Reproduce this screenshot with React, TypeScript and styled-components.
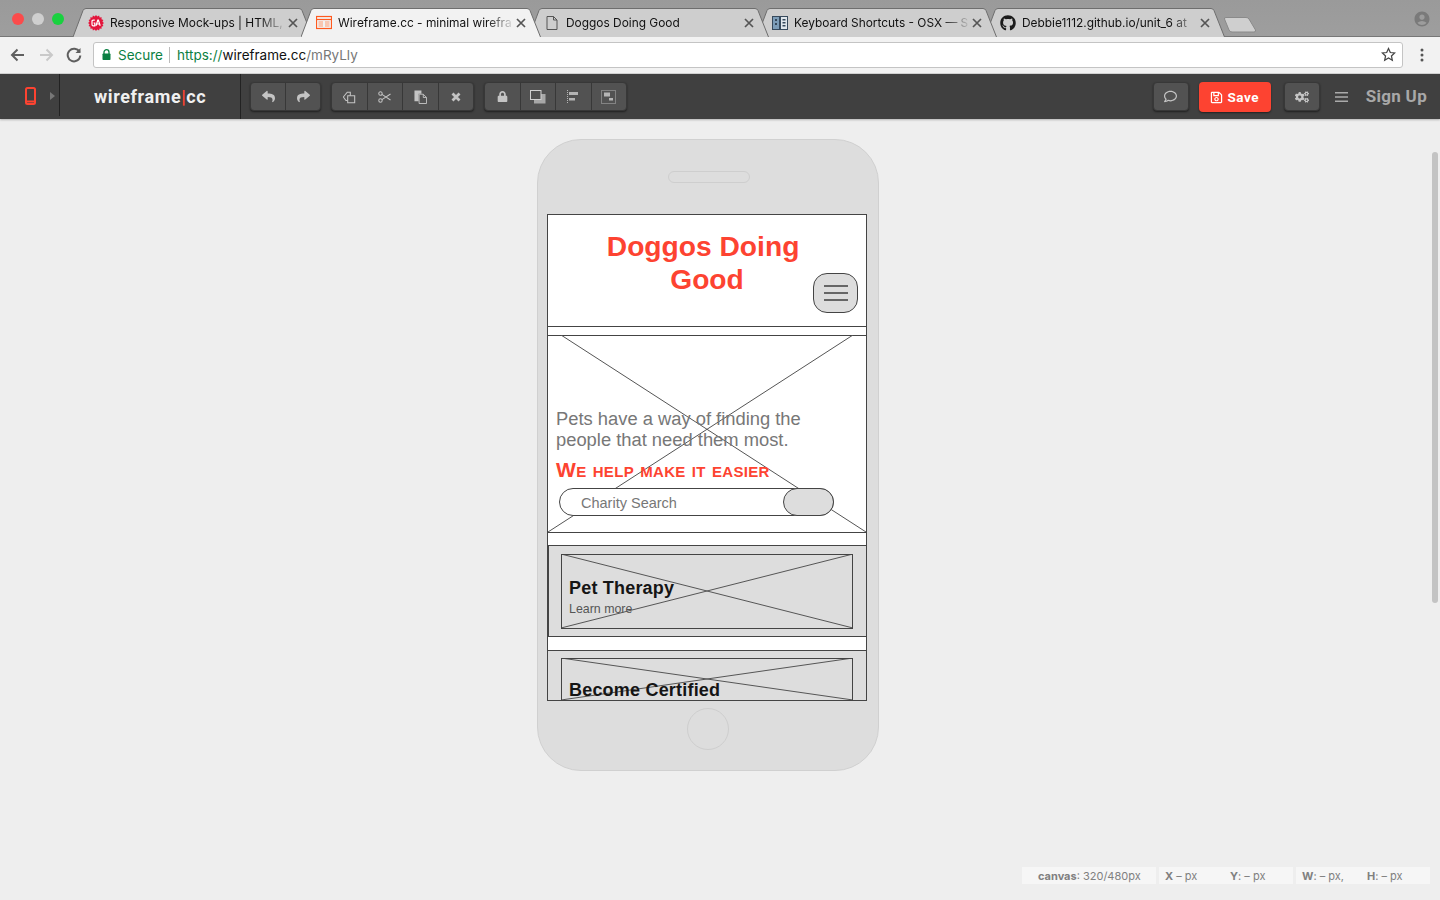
import React from "react";
import styled, { createGlobalStyle } from "styled-components";
import { FaGithub, FaRegComment, FaRegSave, FaCogs, FaLock, FaReply, FaShare } from "react-icons/fa";
import { MdAccountCircle } from "react-icons/md";

const RED = "#fd4331";

const Global = createGlobalStyle`
  html, body { margin: 0; padding: 0; height: 100%; background: #eeeeee; overflow: hidden; }
  #root { height: 100%; }
  * { box-sizing: border-box; }
`;

const Page = styled.div`
  position: relative;
  width: 1440px;
  height: 900px;
  display: flex;
  flex-direction: column;
  font-family: "Liberation Sans", Arial, sans-serif;
  overflow: hidden;
`;

const TabStrip = styled.div`
  height: 37px;
  flex: none;
  display: flex;
  align-items: flex-end;
  padding-left: 73px;
  background: linear-gradient(#9a9a9a, #9e9e9e);
  border-bottom: 1px solid #777;
`;
const Lights = styled.div`
  position: absolute;
  left: 12px;
  top: 13px;
  display: flex;
  gap: 8px;
`;
const Light = styled.span<{ $c: string }>`
  width: 12px;
  height: 12px;
  border-radius: 50%;
  background: ${(p) => p.$c};
`;
const TabBox = styled.div<{ $z: number; $first?: boolean }>`
  position: relative;
  width: 240px;
  height: 29px;
  flex: none;
  margin-left: ${(p) => (p.$first ? "0" : "-12px")};
  margin-bottom: -1px;
  z-index: ${(p) => p.$z};
  display: flex;
  align-items: center;
  padding: 0 14px 0 15px;
  font-family: Inter, "Liberation Sans", sans-serif;
  font-size: 11.9px;
  color: #111;
`;
const TabShape = styled.svg`
  position: absolute;
  inset: 0;
  width: 100%;
  height: 100%;
`;
const TabIcon = styled.span`
  position: relative;
  width: 16px;
  height: 16px;
  margin-right: 6px;
  flex: none;
  display: flex;
`;
const TabTitle = styled.span`
  position: relative;
  flex: 1;
  white-space: nowrap;
  overflow: hidden;
  -webkit-mask-image: linear-gradient(to right, #000 calc(100% - 28px), rgba(0, 0, 0, 0.12) calc(100% - 3px));
  mask-image: linear-gradient(to right, #000 calc(100% - 28px), rgba(0, 0, 0, 0.12) calc(100% - 3px));
`;
const TabClose = styled.span`
  position: relative;
  width: 12px;
  display: flex;
  justify-content: center;
  flex: none;
  color: #555;
`;
const NewTab = styled.svg`
  margin: 0 0 3px -2px;
  width: 34px;
  height: 16px;
  flex: none;
`;
const Avatar = styled.span`
  position: absolute;
  left: 1413px;
  top: 10px;
  color: #7a7a7a;
  display: flex;
`;

const AddressRow = styled.div`
  height: 37px;
  flex: none;
  background: #f2f2f2;
  border-bottom: 1px solid #d4d4d4;
  display: flex;
  align-items: center;
  padding: 0 0 1px 9px;
`;
const NavIcon = styled.svg`
  width: 18px;
  height: 18px;
  margin-right: 10px;
  flex: none;
`;
const Omnibox = styled.div`
  width: 1310px;
  height: 26px;
  flex: none;
  background: #fff;
  border: 1px solid #c4c4c4;
  border-radius: 3px;
  display: flex;
  align-items: center;
  padding: 0 6px 0 8px;
  font-family: Inter, "Liberation Sans", sans-serif;
  font-size: 13.5px;
`;
const Secure = styled.span`
  color: #0b8043;
  margin-left: 7px;
  padding-right: 6px;
  border-right: 1px solid #bbb;
  line-height: 16px;
  margin-right: 7px;
`;
const UrlPart = styled.span<{ $c: string }>`
  color: ${(p) => p.$c};
`;
const Spacer = styled.span`
  flex: 1;
`;
const Kebab = styled.svg`
  margin-left: 10px;
  width: 18px;
  height: 18px;
  flex: none;
`;

const AppBar = styled.div`
  height: 45px;
  flex: none;
  background: #404040;
  display: flex;
  align-items: center;
  box-shadow: 0 1px 2px rgba(0, 0, 0, 0.25);
  position: relative;
  z-index: 2;
`;
const DeviceSection = styled.div`
  width: 60px;
  height: 42px;
  align-self: flex-start;
  flex: none;
  border-right: 1px solid #222;
  display: flex;
  align-items: center;
  padding: 2px 0 0 25px;
  gap: 14px;
`;
const Logo = styled.div`
  width: 181px;
  height: 45px;
  flex: none;
  border-right: 1px solid #222;
  display: flex;
  align-items: center;
  padding: 0 0 1px 34px;
  font-family: Roboto, "Liberation Sans", sans-serif;
  font-weight: 700;
  font-size: 18px;
  letter-spacing: 0.6px;
  color: #f0f0f0;
`;
const LogoBar = styled.span`
  color: ${RED};
  font-weight: 700;
`;
const Group = styled.div<{ $n: number; $first?: boolean }>`
  display: flex;
  width: ${(p) => p.$n * 36 - 1}px;
  margin-left: ${(p) => (p.$first ? "9px" : "10px")};
  height: 29px;
  flex: none;
  background: #525252;
  border-radius: 4px;
  border: 1px solid #383838;
  box-shadow: 0 1px 2px rgba(0, 0, 0, 0.5);
`;
const ToolButton = styled.div`
  flex: 1;
  display: flex;
  align-items: center;
  justify-content: center;
  color: #c4c4c4;
  border-right: 1px solid #383838;
  &:last-child {
    border-right: 0;
  }
`;
const SingleButton = styled.div<{ $ml: number }>`
  width: 36px;
  height: 29px;
  flex: none;
  margin-left: ${(p) => p.$ml}px;
  display: flex;
  align-items: center;
  justify-content: center;
  background: #525252;
  border: 1px solid #383838;
  border-radius: 4px;
  color: #c4c4c4;
  box-shadow: 0 1px 2px rgba(0, 0, 0, 0.5);
`;
const SaveButton = styled.div`
  width: 72px;
  height: 30px;
  flex: none;
  margin: 1px 0 0 10px;
  display: flex;
  align-items: center;
  justify-content: center;
  gap: 4px;
  background: ${RED};
  border-radius: 4px;
  color: #fff;
  font-family: Roboto, "Liberation Sans", sans-serif;
  font-weight: 700;
  font-size: 13.5px;
  letter-spacing: 0.5px;
  box-shadow: 0 1px 2px rgba(0, 0, 0, 0.5);
`;
const Burger = styled.svg`
  width: 13px;
  height: 12px;
  margin-left: 15px;
  flex: none;
`;
const SignUp = styled.div`
  margin: 0 13px 2px 18px;
  font-family: Roboto, "Liberation Sans", sans-serif;
  font-weight: 700;
  font-size: 17px;
  letter-spacing: 0.3px;
  color: #a8a8a8;
  white-space: nowrap;
`;
const BarSpacer = styled.div`
  flex: 1;
`;

const Workspace = styled.div`
  flex: 1;
  padding: 20px 0 0 537px;
  background: #eeeeee;
`;
const Phone = styled.div`
  width: 342px;
  height: 632px;
  background: #dddddd;
  border: 1px solid #d0d0d0;
  border-radius: 44px;
  display: flex;
  flex-direction: column;
  align-items: center;
`;
const Speaker = styled.div`
  width: 82px;
  height: 12px;
  margin: 31px 0 31px 1px;
  border: 1px solid #cecece;
  border-radius: 6px;
`;
const Screen = styled.div`
  position: relative;
  width: 320px;
  height: 487px;
  margin-left: -2px;
  background: #fff;
  border: 1px solid #444;
  overflow: hidden;
`;
const HomeButton = styled.div`
  width: 42px;
  height: 42px;
  margin-top: 7px;
  border: 1px solid #cecece;
  border-radius: 50%;
`;

const Node = styled.div<{ $x: number; $y: number; $w: number; $h: number; $bg?: string }>`
  position: absolute;
  left: ${(p) => p.$x}px;
  top: ${(p) => p.$y}px;
  width: ${(p) => p.$w}px;
  height: ${(p) => p.$h}px;
  border: 1px solid #444;
  background: ${(p) => p.$bg || "transparent"};
`;
const Rule = styled.div<{ $y: number }>`
  position: absolute;
  left: 0;
  right: 0;
  top: ${(p) => p.$y}px;
  border-top: 1px solid #444;
`;
const Cross = styled.svg<{ $x: number; $y: number; $w: number; $h: number }>`
  position: absolute;
  left: ${(p) => p.$x}px;
  top: ${(p) => p.$y}px;
  width: ${(p) => p.$w}px;
  height: ${(p) => p.$h}px;
`;
const Title = styled.div`
  position: absolute;
  left: 0;
  top: 15px;
  width: 318px;
  text-align: center;
  color: ${RED};
  font-weight: 700;
  font-size: 28.2px;
  line-height: 33px;
`;
const MenuButton = styled.div`
  position: absolute;
  left: 265px;
  top: 58px;
  width: 45px;
  height: 40px;
  background: #dddddd;
  border: 1px solid #444;
  border-radius: 14px;
  display: flex;
  flex-direction: column;
  align-items: center;
  justify-content: center;
  gap: 5px;
`;
const MenuLine = styled.span`
  width: 24px;
  height: 2px;
  background: #666;
`;
const Lead = styled.div`
  position: absolute;
  left: 8px;
  top: 193px;
  width: 300px;
  color: #777;
  font-size: 18.35px;
  line-height: 21px;
`;
const Tagline = styled.div`
  position: absolute;
  left: 8px;
  top: 242px;
  white-space: nowrap;
  color: ${RED};
  font-weight: 700;
  font-size: 21px;
  line-height: 26px;
  letter-spacing: 0.33px;
  font-variant: small-caps;
`;
const SearchPill = styled.div`
  position: absolute;
  left: 11px;
  top: 273px;
  width: 275px;
  height: 28px;
  background: #fff;
  border: 1px solid #444;
  border-radius: 14px;
  padding: 2px 0 0 21px;
  display: flex;
  align-items: center;
  color: #777;
  font-size: 14.5px;
`;
const SearchButton = styled.div`
  position: absolute;
  right: -1px;
  top: -1px;
  width: 51px;
  height: 28px;
  background: #dddddd;
  border: 1px solid #444;
  border-radius: 14px;
`;
const CardTitle = styled.div<{ $y: number }>`
  position: absolute;
  left: 21px;
  top: ${(p) => p.$y}px;
  white-space: nowrap;
  color: #151515;
  font-weight: 700;
  font-size: 18px;
  letter-spacing: 0.2px;
  line-height: 24px;
`;
const CardLink = styled.div`
  position: absolute;
  left: 21px;
  top: 386px;
  white-space: nowrap;
  color: #555;
  font-size: 12.4px;
  line-height: 16px;
`;

const Scrollbar = styled.div`
  position: absolute;
  left: 1432px;
  top: 152px;
  width: 6px;
  height: 451px;
  background: #c3c3c3;
  border-radius: 3px;
`;
const StatusBar = styled.div`
  position: absolute;
  left: 1022px;
  top: 867px;
  display: flex;
  gap: 3px;
  color: #808080;
  font-family: Inter, "Liberation Sans", sans-serif;
  font-size: 11px;
`;
const StatusCell = styled.div<{ $pad: number }>`
  width: 134px;
  height: 17px;
  background: #f6f6f6;
  display: flex;
  align-items: center;
  padding-left: ${(p) => p.$pad}px;
  white-space: nowrap;
`;
const StatusField = styled.span<{ $w: number }>`
  width: ${(p) => p.$w}px;
  flex: none;
`;

const tabPath = "M0 29 L10 2.500 Q11 0.500 13 0.500 H226 Q228 0.500 229 2.500 L239.500 29";

const burst = Array.from({ length: 32 }, (_, i) => {
  const r = i % 2 === 0 ? 8 : 6.6;
  const a = (i / 32) * Math.PI * 2;
  return `${(8 + r * Math.cos(a)).toFixed(2)},${(8 + r * Math.sin(a)).toFixed(2)}`;
}).join(" ");

const GaIcon = () => (
  <svg width="16" height="16" viewBox="0 0 16 16">
    <polygon points={burst} fill="#e3163c" />
    <path d="M6.800 5.200H5.200Q4 5.200 4 6.500v3Q4 10.800 5.200 10.800H6.800V8H5.600M8 10.800L9.800 5.200h.6L12.200 10.800M8.700 9h2.800" fill="none" stroke="#fff" strokeWidth="1.200" />
  </svg>
);
const WireIcon = () => (
  <svg width="16" height="16" viewBox="0 0 16 16" fill="none" stroke="#ff5a1f" strokeWidth="1.200">
    <rect x="0.500" y="1.500" width="15" height="12" />
    <path d="M0.500 4.500h15" />
    <path d="M2.500 7h4.500M2.500 9h4.500M2.500 11h4.500M9 7h4.500M9 9h4.500M9 11h4.500" stroke="#ff9a70" strokeWidth="1" />
  </svg>
);
const DocIcon = () => (
  <svg width="16" height="16" viewBox="0 0 16 16" fill="none" stroke="#555" strokeWidth="1">
    <path d="M3 1.500h6.500L13 5v9.500H3z" />
    <path d="M9.500 1.500V5H13" />
  </svg>
);
const BookIcon = () => (
  <svg width="16" height="16" viewBox="0 0 16 16">
    <rect x="0" y="1" width="16" height="14" fill="#36495c" />
    <rect x="1" y="2" width="6" height="12" fill="#7d9db8" />
    <rect x="9" y="2" width="6" height="12" fill="#dfe6ec" />
    <path d="M3 4h2v2H3zM3 8h2v2H3zM10.500 4h3v1.500h-3zM10.500 7h3v1.500h-3zM10.500 10h3v1.500h-3z" fill="#36495c" />
  </svg>
);

const X = () => (
  <svg width="10" height="10" viewBox="0 0 10 10" stroke="currentColor" strokeWidth="1.700">
    <path d="M1 1l8 8M9 1l-8 8" />
  </svg>
);

const tabs = [
  { title: "Responsive Mock-ups | HTML,", icon: <GaIcon /> },
  { title: "Wireframe.cc - minimal wirefra", icon: <WireIcon />, active: true },
  { title: "Doggos Doing Good", icon: <DocIcon /> },
  { title: "Keyboard Shortcuts - OSX — S", icon: <BookIcon /> },
  { title: "Debbie1112.github.io/unit_6 at", icon: <FaGithub size={16} color="#1b1b1b" /> },
];

const CopyIcon = () => (
  <svg width="14" height="14" viewBox="0 0 16 16" fill="none" stroke="currentColor" strokeWidth="1.200">
    <path d="M1.500 8L6 2.500h3.500v4" />
    <path d="M1.500 8L4.500 12h2" />
    <path d="M6.500 6.500H14.500V14.500H6.500z" />
  </svg>
);
const ScissorsIcon = () => (
  <svg width="13" height="12" viewBox="0 0 15 14" fill="none" stroke="currentColor" strokeWidth="1.200">
    <circle cx="2.800" cy="3" r="2" />
    <circle cx="2.800" cy="11" r="2" />
    <path d="M4.500 4l10 6.500M4.500 10l10-6.500" />
  </svg>
);
const PasteIcon = () => (
  <svg width="13" height="14" viewBox="0 0 14 15">
    <path d="M0.500 0.500H8V4H5V12H0.500z" fill="currentColor" />
    <path d="M5.500 4.500H10L13.500 8V14.500H5.500z" fill="#525252" stroke="currentColor" strokeWidth="1" />
    <path d="M10 4.500V8H13.500" fill="none" stroke="currentColor" strokeWidth="1" />
  </svg>
);
const DeleteIcon = () => (
  <svg width="10" height="10" viewBox="0 0 10 10" stroke="currentColor" strokeWidth="2.800">
    <path d="M1.500 1.500l7 7M8.500 1.500l-7 7" />
  </svg>
);
const FrontIcon = () => (
  <svg width="16" height="14" viewBox="0 0 16 14">
    <path d="M4 4H15.500V13.500H4z" fill="#a8a8a8" />
    <rect x="0.500" y="0.500" width="10.500" height="9" fill="#525252" stroke="#d0d0d0" />
  </svg>
);
const AlignIcon = () => (
  <svg width="12" height="14" viewBox="0 0 12 14">
    <path d="M0.500 0v14" stroke="#b5b5b5" strokeDasharray="1 1" />
    <path d="M2 2h9v3H2zM2 8h6v2.500H2z" fill="#b5b5b5" />
  </svg>
);
const GroupIcon = () => (
  <svg width="15" height="14" viewBox="0 0 15 14">
    <rect x="0.500" y="0.500" width="14" height="13" fill="none" stroke="#b5b5b5" strokeDasharray="1 1" />
    <path d="M3 2.500h6v4H3zM8 8h4v2.500H8z" fill="#b5b5b5" />
  </svg>
);

const CrossLines = ({ x, y, w, h, x1, x2 }: { x: number; y: number; w: number; h: number; x1: number; x2: number }) => (
  <Cross $x={x} $y={y} $w={w} $h={h} viewBox={`0 0 ${w} ${h}`} fill="none" stroke="#555" strokeWidth="1">
    <path d={`M${x1} 0L${w - x2} ${h}M${w - x1} 0L${x2} ${h}`} />
  </Cross>
);

export default function App() {
  return (
    <Page>
      <Global />
      <TabStrip>
        <Lights>
          <Light $c="#fb4b4b" />
          <Light $c="#cfcfcf" />
          <Light $c="#19d13f" />
        </Lights>
        {tabs.map((t, i) => (
          <TabBox key={t.title} $z={t.active ? 20 : 10 - i} $first={i === 0}>
            <TabShape viewBox="0 0 240 29" preserveAspectRatio="none">
              <path d={tabPath} fill={t.active ? "#f2f2f2" : "#cecece"} stroke="#6e6e6e" strokeWidth="1" />
            </TabShape>
            <TabIcon>{t.icon}</TabIcon>
            <TabTitle>{t.title}</TabTitle>
            <TabClose>
              <X />
            </TabClose>
          </TabBox>
        ))}
        <NewTab viewBox="0 0 34 16">
          <path d="M3 0.500H23Q25 0.500 26 2L32.500 13Q33 15 31 15H9Q7 15 6 13L1.500 2Q1 0.500 3 0.500z" fill="#cfcfcf" stroke="#8a8a8a" />
        </NewTab>
        <Avatar>
          <MdAccountCircle size={18} />
        </Avatar>
      </TabStrip>

      <AddressRow>
        <NavIcon viewBox="0 0 18 18" fill="none" stroke="#5f5f5f" strokeWidth="2">
          <path d="M15 9H3M8.500 3.500L3 9l5.500 5.500" />
        </NavIcon>
        <NavIcon viewBox="0 0 18 18" fill="none" stroke="#c9c9c9" strokeWidth="2">
          <path d="M3 9h12M9.500 3.500L15 9l-5.500 5.500" />
        </NavIcon>
        <NavIcon viewBox="0 0 18 18" fill="none" stroke="#5f5f5f" strokeWidth="2">
          <path d="M14.500 6A6.300 6.300 0 1 0 15.300 9.500" />
          <path d="M15.500 2v5h-5z" fill="#5f5f5f" stroke="none" />
        </NavIcon>
        <Omnibox>
          <svg width="9" height="11" viewBox="0 0 9 11">
            <path d="M2 5V3.200a2.500 2.500 0 0 1 5 0V5" fill="none" stroke="#0b8043" strokeWidth="1.300" />
            <rect x="0.500" y="4.500" width="8" height="6.500" rx="0.800" fill="#0b8043" />
          </svg>
          <Secure>Secure</Secure>
          <UrlPart $c="#0b8043">https://</UrlPart>
          <UrlPart $c="#111">wireframe.cc</UrlPart>
          <UrlPart $c="#777">/mRyLly</UrlPart>
          <Spacer />
          <svg width="15" height="15" viewBox="0 0 24 24" fill="none" stroke="#444" strokeWidth="2">
            <path d="M12 2.500l2.900 6.300 6.900.8-5.100 4.700 1.400 6.800L12 17.700l-6.100 3.400 1.400-6.800L2.200 9.600l6.900-.8z" />
          </svg>
        </Omnibox>
        <Kebab viewBox="0 0 18 18" fill="#555">
          <circle cx="9" cy="4" r="1.500" />
          <circle cx="9" cy="9" r="1.500" />
          <circle cx="9" cy="14" r="1.500" />
        </Kebab>
      </AddressRow>

      <AppBar>
        <DeviceSection>
          <svg width="11" height="18" viewBox="0 0 11 18" fill="none" stroke={RED} strokeWidth="2">
            <rect x="1" y="1" width="9" height="16" rx="1.500" />
            <path d="M1 14.500h9" strokeWidth="2" />
          </svg>
          <svg width="5" height="8" viewBox="0 0 5 8">
            <path d="M0 0l5 4-5 4z" fill="#777" />
          </svg>
        </DeviceSection>
        <Logo>
          wireframe<LogoBar>|</LogoBar>cc
        </Logo>
        <Group $first $n={2}>
          <ToolButton><FaReply size={13} /></ToolButton>
          <ToolButton><FaShare size={13} /></ToolButton>
        </Group>
        <Group $n={4}>
          <ToolButton><CopyIcon /></ToolButton>
          <ToolButton><ScissorsIcon /></ToolButton>
          <ToolButton><PasteIcon /></ToolButton>
          <ToolButton><DeleteIcon /></ToolButton>
        </Group>
        <Group $n={4}>
          <ToolButton><FaLock size={11} /></ToolButton>
          <ToolButton><FrontIcon /></ToolButton>
          <ToolButton><AlignIcon /></ToolButton>
          <ToolButton><GroupIcon /></ToolButton>
        </Group>
        <BarSpacer />
        <SingleButton $ml={0}><FaRegComment size={13} /></SingleButton>
        <SaveButton>
          <FaRegSave size={13} />
          Save
        </SaveButton>
        <SingleButton $ml={13}><FaCogs size={14} /></SingleButton>
        <Burger viewBox="0 0 13 12" fill="#aaa">
          <path d="M0 1h13v1.500H0zM0 5.200h13v1.500H0zM0 9.500h13V11H0z" />
        </Burger>
        <SignUp>Sign Up</SignUp>
      </AppBar>

      <Workspace>
        <Phone>
          <Speaker />
          <Screen>
            <Rule $y={111} />
            <Title>
              Doggos Doing&nbsp;
              <br />
              Good
            </Title>
            <MenuButton>
              <MenuLine />
              <MenuLine />
              <MenuLine />
            </MenuButton>
            <Rule $y={120} />
            <CrossLines x={0} y={120} w={318} h={197} x1={13} x2={0} />
            <Lead>
              Pets have a way of finding the
              <br />
              people that need them most.
            </Lead>
            <Tagline>We help make it easier</Tagline>
            <SearchPill>
              Charity Search
              <SearchButton />
            </SearchPill>
            <Rule $y={317} />
            <Node $x={0} $y={330} $w={319} $h={92} $bg="#dddddd" />
            <CrossLines x={13} y={339} w={292} h={74} x1={0} x2={0} />
            <Node $x={13} $y={339} $w={292} $h={75} />
            <CardTitle $y={361}>Pet Therapy</CardTitle>
            <CardLink>Learn more</CardLink>
            <Node $x={-1} $y={435} $w={320} $h={60} $bg="#dddddd" />
            <CrossLines x={13} y={443} w={292} h={42} x1={0} x2={0} />
            <Node $x={13} $y={443} $w={292} $h={60} />
            <CardTitle $y={463}>Become Certified</CardTitle>
          </Screen>
          <HomeButton />
        </Phone>
      </Workspace>

      <Scrollbar />
      <StatusBar>
        <StatusCell $pad={16}>
          <span><b>canvas</b>: 320/480px</span>
        </StatusCell>
        <StatusCell $pad={6}>
          <StatusField $w={65}><b>X</b> – px</StatusField>
          <StatusField $w={60}><b>Y</b>: – px</StatusField>
        </StatusCell>
        <StatusCell $pad={6}>
          <StatusField $w={65}><b>W</b>: – px,</StatusField>
          <StatusField $w={60}><b>H</b>: – px</StatusField>
        </StatusCell>
      </StatusBar>
    </Page>
  );
}
